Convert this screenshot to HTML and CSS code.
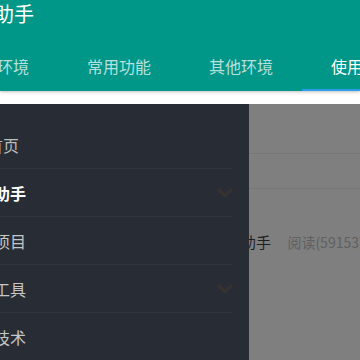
FILE: index.html
```html
<!DOCTYPE html>
<html lang="zh">
<head>
  <meta charset="UTF-8" />
  <meta name="viewport" content="width=device-width, initial-scale=1.0" />
  <title>开发助手</title>
  <link rel="stylesheet" href="styles.css">
</head>
<body>
  <header class="header">
    <div class="title">开发助手</div>
    <nav class="tabs">
      <div class="tab">开发环境</div>
      <div class="tab">常用功能</div>
      <div class="tab">其他环境</div>
      <div class="tab active">使用帮助</div>
    </nav>
  </header>
  <div class="strip"></div>

  <div class="main">
    <aside class="drawer">
      <div class="nav-item home"><span>返回首页</span></div>
      <div class="nav-item current">
        <span>开发助手</span>
        <svg class="chevron" width="18" height="12" viewBox="0 0 18 12"><path d="M2 2 L9 9 L16 2" fill="none" stroke="#36332f" stroke-width="3"/></svg>
      </div>
      <div class="nav-item"><span>开源项目</span></div>
      <div class="nav-item">
        <span>开发工具</span>
        <svg class="chevron" width="18" height="12" viewBox="0 0 18 12"><path d="M2 2 L9 9 L16 2" fill="none" stroke="#36332f" stroke-width="3"/></svg>
      </div>
      <div class="nav-item"><span>前端技术</span></div>
    </aside>

    <section class="overlay">
      <div class="block first"></div>
      <div class="block second"></div>
      <div class="article">
        <span class="name">开发助手</span>
        <span class="reads">阅读(59153)</span>
      </div>
    </section>
  </div>
</body>
</html>
```

FILE: styles.css
```css
body {
  margin: 0;
  width: 360px;
  height: 360px;
  overflow: hidden;
  font-family: "Noto Sans CJK SC", "Noto Sans", sans-serif;
  background: #fff;
}

.header {
  background: #009688;
  height: 91px;
  box-shadow: 0 1px 3px rgba(0, 0, 0, 0.25);
  position: relative;
  z-index: 1;
}

.title {
  color: #fff;
  font-size: 20px;
  line-height: 28px;
  height: 43px;
  margin-left: -46px;
  white-space: nowrap;
}

.tabs {
  display: flex;
  margin-left: -64px;
  height: 48px;
}

.tab {
  flex: none;
  width: 122px;
  box-sizing: border-box;
  text-align: center;
  font-size: 16px;
  line-height: 46px;
  color: rgba(255, 255, 255, 0.72);
  border-bottom: 2px solid transparent;
}

.tab.active {
  color: #fff;
  border-bottom-color: #2b9cf0;
}

.strip {
  height: 13px;
  background: #fff;
}

.main {
  display: flex;
  height: 256px;
}

.drawer {
  width: 249px;
  flex: none;
  background: #282d35;
  padding-top: 17px;
  box-sizing: border-box;
  overflow: hidden;
}

.nav-item {
  display: flex;
  align-items: center;
  justify-content: space-between;
  height: 48px;
  margin-right: 16px;
  border-bottom: 1px solid #30353d;
  box-sizing: border-box;
  font-size: 16px;
  color: #c6c6c6;
  white-space: nowrap;
}

.nav-item span {
  margin-left: -38px;
}

.nav-item.home span {
  margin-left: -45px;
  color: #bcbcbc;
}

.nav-item.current {
  color: #fff;
  font-weight: bold;
}

.chevron {
  margin-right: -1px;
}

.overlay {
  flex: 1;
  background: #7f7f7f;
  overflow: hidden;
}

.block {
  border-bottom: 1px solid #777;
}

.block.first {
  height: 49px;
}

.block.second {
  height: 34px;
}

.article {
  margin-left: -38px;
  padding-top: 42px;
  font-size: 15px;
  line-height: 22px;
  white-space: nowrap;
}

.name {
  color: #1f1f1f;
}

.reads {
  color: #606060;
  font-size: 14px;
  margin-left: 13px;
}
```
